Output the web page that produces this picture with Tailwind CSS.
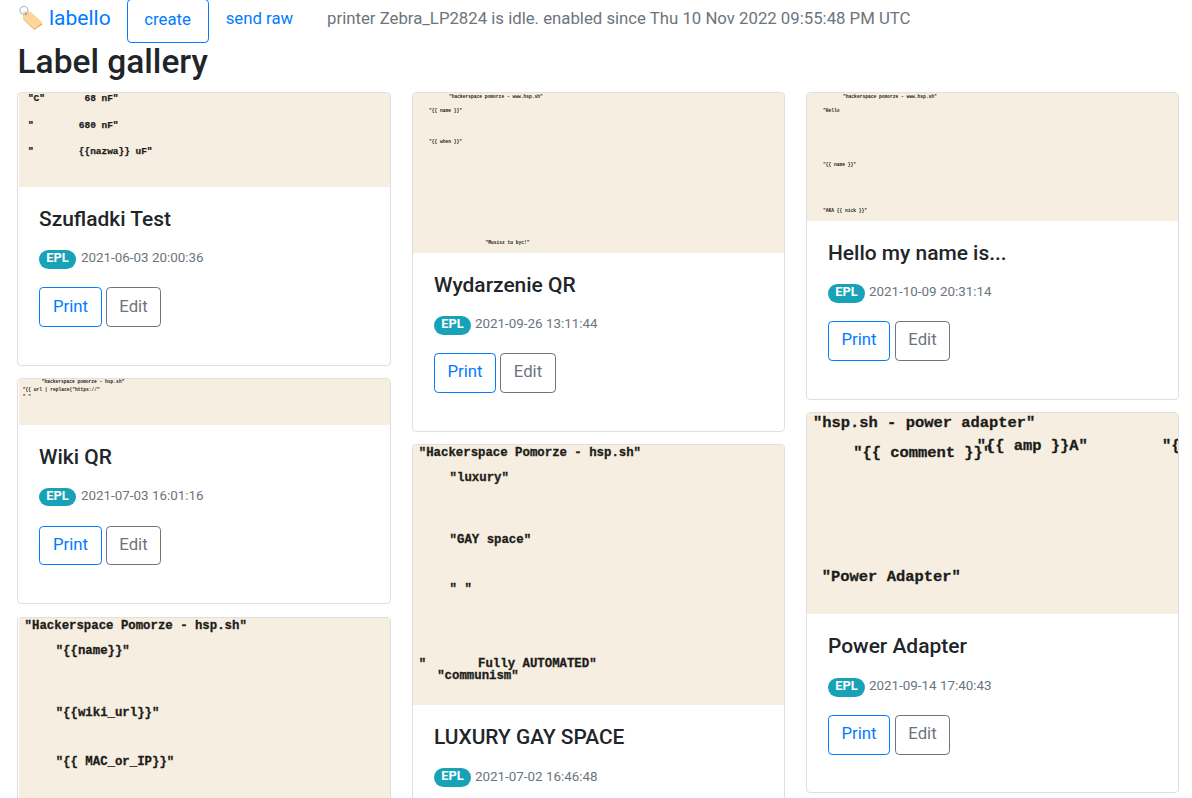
<!DOCTYPE html>
<html lang="en" class="text-[16.76px]">
<head>
<meta charset="utf-8">
<title>labello</title>
<script src="https://cdn.jsdelivr.net/npm/@tailwindcss/browser@4"></script>
</head>
<body class="h-[798px] overflow-hidden bg-white font-[Roboto,sans-serif] text-base text-[#212529]">
<nav class="flex h-[43px] items-start pl-[18px]">
  <a class="flex h-[37px] items-center text-[21px] text-[#007bff]">
    <svg class="-mt-[2px] mr-[6px] h-[25px] w-[25px]" viewBox="0 0 25 25" fill="none">
      <path d="M5.2 9 12.6 7.6 23.8 18.4Q24.4 19.2 23.8 20L17 24.6Q16 25 15.2 24L5.4 14.6Z" fill="#e8ad66" />
      <path d="M5 7.4Q5 6.4 6 6.4L12.6 6.8 23.6 16.6Q24.3 17.3 23.7 18.1L17 23.4Q16.3 24 15.5 23.3L5.6 13.8Z" fill="#ffd59b" />
      <circle cx="8" cy="9" r="1.2" fill="#b98d5c" />
      <circle cx="6" cy="5.5" r="4" stroke="#a5bfca" stroke-width="1.2" />
    </svg>
    <span>labello</span>
  </a>
  <a class="-mt-px ml-[16px] flex h-[44px] w-[82px] items-center justify-center rounded border border-[#007bff] pb-[3px] text-[#007bff]">create</a>
  <a class="ml-[17px] flex h-[37px] items-center text-[#007bff]">send raw</a>
  <span class="ml-[34px] flex h-[37px] items-center text-[#6c757d]">printer Zebra_LP2824 is idle. enabled since Thu 10 Nov 2022 09:55:48 PM UTC</span>
</nav>
<h2 class="h-[49px] pl-[17.5px] text-[33.5px] leading-[37px] font-medium">Label gallery</h2>

<main class="flex items-start gap-[21px] pl-[17px]">
  <section class="flex w-[374px] flex-col">
    <article class="mb-[12px] h-[274px] overflow-hidden rounded border border-[#dfdfdf] pl-px">
      <svg class="block h-[94px] w-[371px] bg-[#f6eee0] font-['Liberation_Mono',monospace] font-bold [&>text]:whitespace-pre" viewBox="19 93 371 94" font-size="9.45" fill="#1c1c1a" stroke="#1c1c1a" stroke-width="0.25">
        <text x="27.9" y="101.3">"C"       68 nF"</text>
        <text x="27.9" y="127.8">"        680 nF"</text>
        <text x="27.9" y="153.8">"        {{nazwa}} uF"</text>
      </svg>
      <div class="px-[20px] pt-[19px]">
        <h5 class="text-[20.95px] leading-[26px] font-medium">Szufladki Test</h5>
        <p class="mt-[13px] flex h-[26px] items-center"><span class="mt-[3px] mr-[5px] h-[19px] w-[37px] rounded-full bg-[#17a2b8] text-center text-[12.8px] leading-[16px] font-bold text-white">EPL</span><span class="text-[13.4px] text-[#6c757d]">2021-06-03 20:00:36</span></p>
        <div class="mt-[16px] flex gap-[4px]"><a class="h-[40px] w-[63px] rounded border border-[#007bff] text-center leading-[37px] text-[#007bff]">Print</a><a class="h-[40px] w-[55px] rounded border border-[#6c757d] text-center leading-[37px] text-[#6c757d]">Edit</a></div>
      </div>
    </article>
    <article class="mb-[13px] h-[226px] overflow-hidden rounded border border-[#dfdfdf] pl-px">
      <svg class="block h-[46px] w-[371px] bg-[#f6eee0] font-['Liberation_Mono',monospace] font-bold [&>text]:whitespace-pre" viewBox="19 379 371 46" font-size="4.6" fill="#1c1c1a">
        <text x="41.7" y="383.3">"hackerspace pomorze - hsp.sh"</text>
        <text x="22.7" y="390.7">"{{ url | replace("https://"</text>
        <text x="22.7" y="398">" "</text>
      </svg>
      <div class="px-[20px] pt-[19px]">
        <h5 class="text-[20.95px] leading-[26px] font-medium">Wiki QR</h5>
        <p class="mt-[13px] flex h-[27px] items-center"><span class="mt-[1px] mr-[5px] h-[18px] w-[37px] rounded-full bg-[#17a2b8] text-center text-[12.8px] leading-[16px] font-bold text-white">EPL</span><span class="text-[13.4px] text-[#6c757d]">2021-07-03 16:01:16</span></p>
        <div class="mt-[16px] flex gap-[4px]"><a class="h-[39px] w-[63px] rounded border border-[#007bff] text-center leading-[35px] text-[#007bff]">Print</a><a class="h-[39px] w-[55px] rounded border border-[#6c757d] text-center leading-[35px] text-[#6c757d]">Edit</a></div>
      </div>
    </article>
    <article class="h-[181px] overflow-hidden rounded-t border border-b-0 border-[#dfdfdf] pl-px">
      <svg class="block h-[180px] w-[371px] bg-[#f6eee0] font-['Liberation_Mono',monospace] font-bold [&>text]:whitespace-pre" viewBox="19 618 371 180" font-size="12.35" fill="#1c1c1a" stroke="#1c1c1a" stroke-width="0.3">
        <text x="24.6" y="629.2">"Hackerspace Pomorze - hsp.sh"</text>
        <text x="55.7" y="654.3">"{{name}}"</text>
        <text x="55.7" y="716.2">"{{wiki_url}}"</text>
        <text x="55.7" y="765.4">"{{ MAC_or_IP}}"</text>
      </svg>
    </article>
  </section>

  <section class="flex w-[373px] flex-col">
    <article class="mb-[12px] h-[340px] overflow-hidden rounded border border-[#dfdfdf]">
      <svg class="block h-[160px] w-[371px] bg-[#f6eee0] font-['Liberation_Mono',monospace] font-bold [&>text]:whitespace-pre" viewBox="413 93 371 160" font-size="4.6" fill="#1c1c1a">
        <text x="449" y="97.5">"hackerspace pomorze - www.hsp.sh"</text>
        <text x="429" y="112">"{{ name }}"</text>
        <text x="429" y="143">"{{ when }}"</text>
        <text x="485.5" y="243.7">"Musisz tu byc!"</text>
      </svg>
      <div class="px-[21px] pt-[19px]">
        <h5 class="text-[20.95px] leading-[26px] font-medium">Wydarzenie QR</h5>
        <p class="mt-[13px] flex h-[26px] items-center"><span class="mt-[3px] mr-[4px] h-[19px] w-[37px] rounded-full bg-[#17a2b8] text-center text-[12.8px] leading-[16px] font-bold text-white">EPL</span><span class="text-[13.4px] text-[#6c757d]">2021-09-26 13:11:44</span></p>
        <div class="mt-[16px] flex gap-[4px]"><a class="h-[40px] w-[62px] rounded border border-[#007bff] text-center leading-[35px] text-[#007bff]">Print</a><a class="h-[40px] w-[56px] rounded border border-[#6c757d] text-center leading-[35px] text-[#6c757d]">Edit</a></div>
      </div>
    </article>
    <article class="h-[354px] overflow-hidden rounded-t border border-b-0 border-[#dfdfdf]">
      <svg class="block h-[260px] w-[371px] bg-[#f6eee0] font-['Liberation_Mono',monospace] font-bold [&>text]:whitespace-pre" viewBox="413 445 371 260" font-size="12.35" fill="#1c1c1a" stroke="#1c1c1a" stroke-width="0.3">
        <text x="418.8" y="456.4">"Hackerspace Pomorze - hsp.sh"</text>
        <text x="449.6" y="481">"luxury"</text>
        <text x="449.6" y="543">"GAY space"</text>
        <text x="449.6" y="592">" "</text>
        <text x="418.8" y="666.8">"       Fully AUTOMATED"</text>
        <text x="437.2" y="679">"communism"</text>
      </svg>
      <div class="px-[21px] pt-[19px]">
        <h5 class="text-[20.9px] leading-[26px] font-medium">LUXURY GAY SPACE</h5>
        <p class="mt-[14px] flex h-[26px] items-center"><span class="mt-[1px] mr-[4px] h-[19px] w-[37px] rounded-full bg-[#17a2b8] text-center text-[12.8px] leading-[16px] font-bold text-white">EPL</span><span class="text-[13.4px] text-[#6c757d]">2021-07-02 16:46:48</span></p>
      </div>
    </article>
  </section>

  <section class="flex w-[373px] flex-col">
    <article class="mb-[12px] h-[308px] overflow-hidden rounded border border-[#dfdfdf]">
      <svg class="block h-[128px] w-[371px] bg-[#f6eee0] font-['Liberation_Mono',monospace] font-bold [&>text]:whitespace-pre" viewBox="807 93 371 128" font-size="4.6" fill="#1c1c1a">
        <text x="843.1" y="97.5">"hackerspace pomorze - www.hsp.sh"</text>
        <text x="823" y="112">"Hello</text>
        <text x="823" y="166">"{{ name }}"</text>
        <text x="823" y="212">"AKA {{ nick }}"</text>
      </svg>
      <div class="px-[21px] pt-[19px]">
        <h5 class="text-[20.95px] leading-[26px] font-medium">Hello my name is...</h5>
        <p class="mt-[13px] flex h-[26px] items-center"><span class="mt-[3px] mr-[4px] h-[19px] w-[37px] rounded-full bg-[#17a2b8] text-center text-[12.8px] leading-[16px] font-bold text-white">EPL</span><span class="text-[13.4px] text-[#6c757d]">2021-10-09 20:31:14</span></p>
        <div class="mt-[16px] flex gap-[5px]"><a class="h-[40px] w-[62px] rounded border border-[#007bff] text-center leading-[35px] text-[#007bff]">Print</a><a class="h-[40px] w-[55px] rounded border border-[#6c757d] text-center leading-[35px] text-[#6c757d]">Edit</a></div>
      </div>
    </article>
    <article class="h-[381px] overflow-hidden rounded border border-[#dfdfdf]">
      <svg class="block h-[201px] w-[371px] bg-[#f6eee0] font-['Liberation_Mono',monospace] font-bold [&>text]:whitespace-pre" viewBox="807 413 371 201" font-size="15.44" fill="#1c1c1a" stroke="#1c1c1a" stroke-width="0.3">
        <text x="813" y="426.6">"hsp.sh - power adapter"</text>
        <text x="853.2" y="457.4">"{{ comment }}"</text>
        <text x="976.7" y="450.2">"{{ amp }}A"</text>
        <text x="1162.1" y="450.2">"{{</text>
        <text x="821.8" y="581.2">"Power Adapter"</text>
      </svg>
      <div class="px-[21px] pt-[19px]">
        <h5 class="text-[20.95px] leading-[26px] font-medium">Power Adapter</h5>
        <p class="mt-[14px] flex h-[26px] items-center"><span class="mt-[3px] mr-[4px] h-[19px] w-[37px] rounded-full bg-[#17a2b8] text-center text-[12.8px] leading-[16px] font-bold text-white">EPL</span><span class="text-[13.4px] text-[#6c757d]">2021-09-14 17:40:43</span></p>
        <div class="mt-[16px] flex gap-[5px]"><a class="h-[40px] w-[62px] rounded border border-[#007bff] text-center leading-[35px] text-[#007bff]">Print</a><a class="h-[40px] w-[55px] rounded border border-[#6c757d] text-center leading-[35px] text-[#6c757d]">Edit</a></div>
      </div>
    </article>
  </section>
</main>
</body>
</html>
